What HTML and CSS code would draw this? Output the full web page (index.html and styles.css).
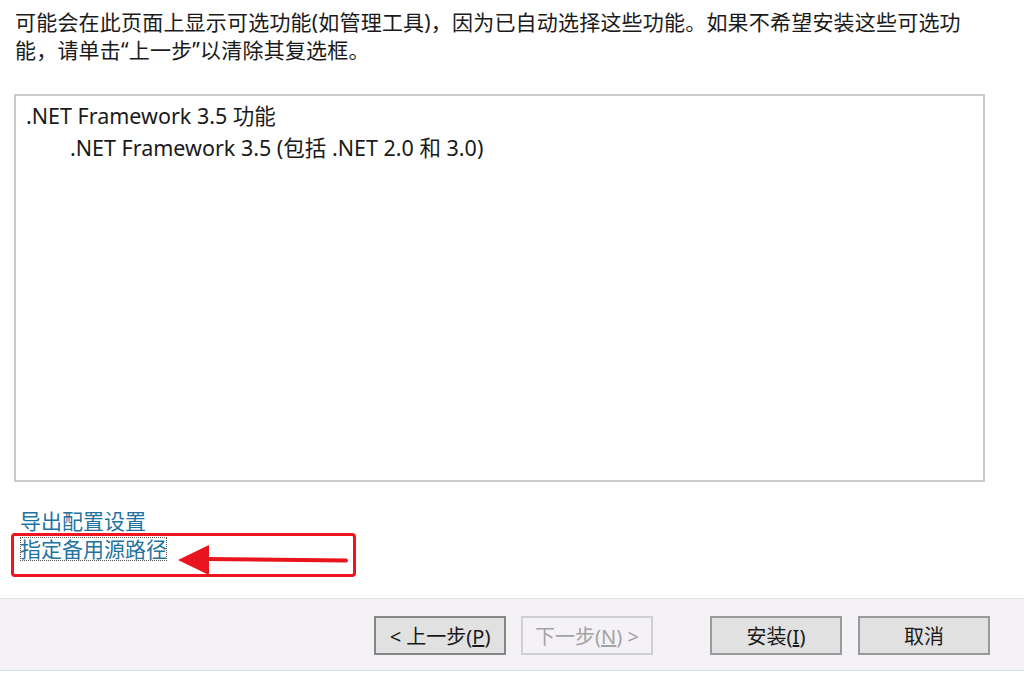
FILE: index.html
```html
<!DOCTYPE html>
<html lang="zh-CN">
<head>
    <meta charset="UTF-8">
    <title>确认安装所选内容</title>
    <link rel="stylesheet" href="styles.css">
</head>
<body>
    <div class="page">
        <p class="intro">可能会在此页面上显示可选功能(如管理工具)，因为已自动选择这些功能。如果不希望安装这些可选功能，请单击“上一步”以清除其复选框。</p>

        <div class="feature-list">
            <div class="feature">.NET Framework 3.5 功能</div>
            <div class="feature sub">.NET Framework 3.5 (包括 .NET 2.0 和 3.0)</div>
        </div>

        <div class="links">
            <a class="link" href="#">导出配置设置</a>
            <a class="link focused" href="#">指定备用源路径</a>
            <!-- 标注框和箭头 -->
            <div class="callout">
                <svg class="arrow" width="172" height="34" viewBox="0 0 172 34">
                    <polygon points="0,17 31,2 31,32" fill="#e8141e"/>
                    <path d="M28 16 L168 17.5" stroke="#e8141e" stroke-width="4" stroke-linecap="round"/>
                </svg>
            </div>
        </div>

        <div class="footer">
            <button class="btn default">&lt; 上一步(<u>P</u>)</button>
            <button class="btn" disabled>下一步(<u>N</u>) &gt;</button>
            <button class="btn install">安装(<u>I</u>)</button>
            <button class="btn">取消</button>
        </div>
    </div>
</body>
</html>
```

FILE: styles.css
```css
body {
    margin: 0;
    background: #fff;
    font-family: "Noto Sans", "Noto Sans CJK SC", sans-serif;
    color: #1a1a1a;
}
.page {
    width: 1024px;
    height: 674px;
    display: flex;
    flex-direction: column;
}
.intro {
    margin: 8px 0 0 15px;
    width: 960px;
    font-size: 21px;
    line-height: 28px;
    letter-spacing: 0.2px;
}
.feature-list {
    margin: 30px 0 0 14px;
    width: 967px;
    height: 380px;
    border: 2px solid #cbcbcb;
    padding-top: 4px;
    box-sizing: content-box;
}
.feature {
    font-size: 21.5px;
    line-height: 32px;
    padding-left: 10px;
}
.feature.sub {
    padding-left: 54px;
}
.links {
    position: relative;
    margin: 25px 0 0 19px;
    display: flex;
    flex-direction: column;
    align-items: flex-start;
    font-size: 21px;
    line-height: 28px;
}
.link {
    color: #1f73a0;
    text-decoration: none;
    padding: 0 1px;
}
.focused {
    outline: 1px dotted #555;
    outline-offset: -2px;
    line-height: 26px;
    margin-top: 1px;
}
.callout {
    position: absolute;
    left: -8px;
    top: 26px;
    width: 339px;
    height: 38px;
    border: 3px solid #f0141e;
    border-radius: 4px;
}
.arrow {
    position: absolute;
    left: 164px;
    top: 7px;
}
.footer {
    margin-top: auto;
    height: 71px;
    margin-bottom: 3px;
    background: #f5f2f7;
    border-top: 1px solid #e2e0e4;
    border-bottom: 1px solid #d4e0ea;
    display: flex;
    align-items: center;
    justify-content: flex-end;
    padding-right: 34px;
    gap: 15px;
}
.btn {
    width: 132px;
    height: 39px;
    background: #e1e1e1;
    border: 2px solid #9a9a9a;
    font-family: "Noto Sans", "Noto Sans CJK SC", sans-serif;
    font-size: 20px;
    color: #1a1a1a;
    padding: 0;
    margin-top: 1px;
}
.btn.default {
    border-color: #868686;
}
.btn:disabled {
    background: #f5f2f7;
    border-color: #d0d0d0;
    color: #a2a2a2;
}
.btn.install {
    margin-left: 42px;
    margin-right: 1px;
}
```
